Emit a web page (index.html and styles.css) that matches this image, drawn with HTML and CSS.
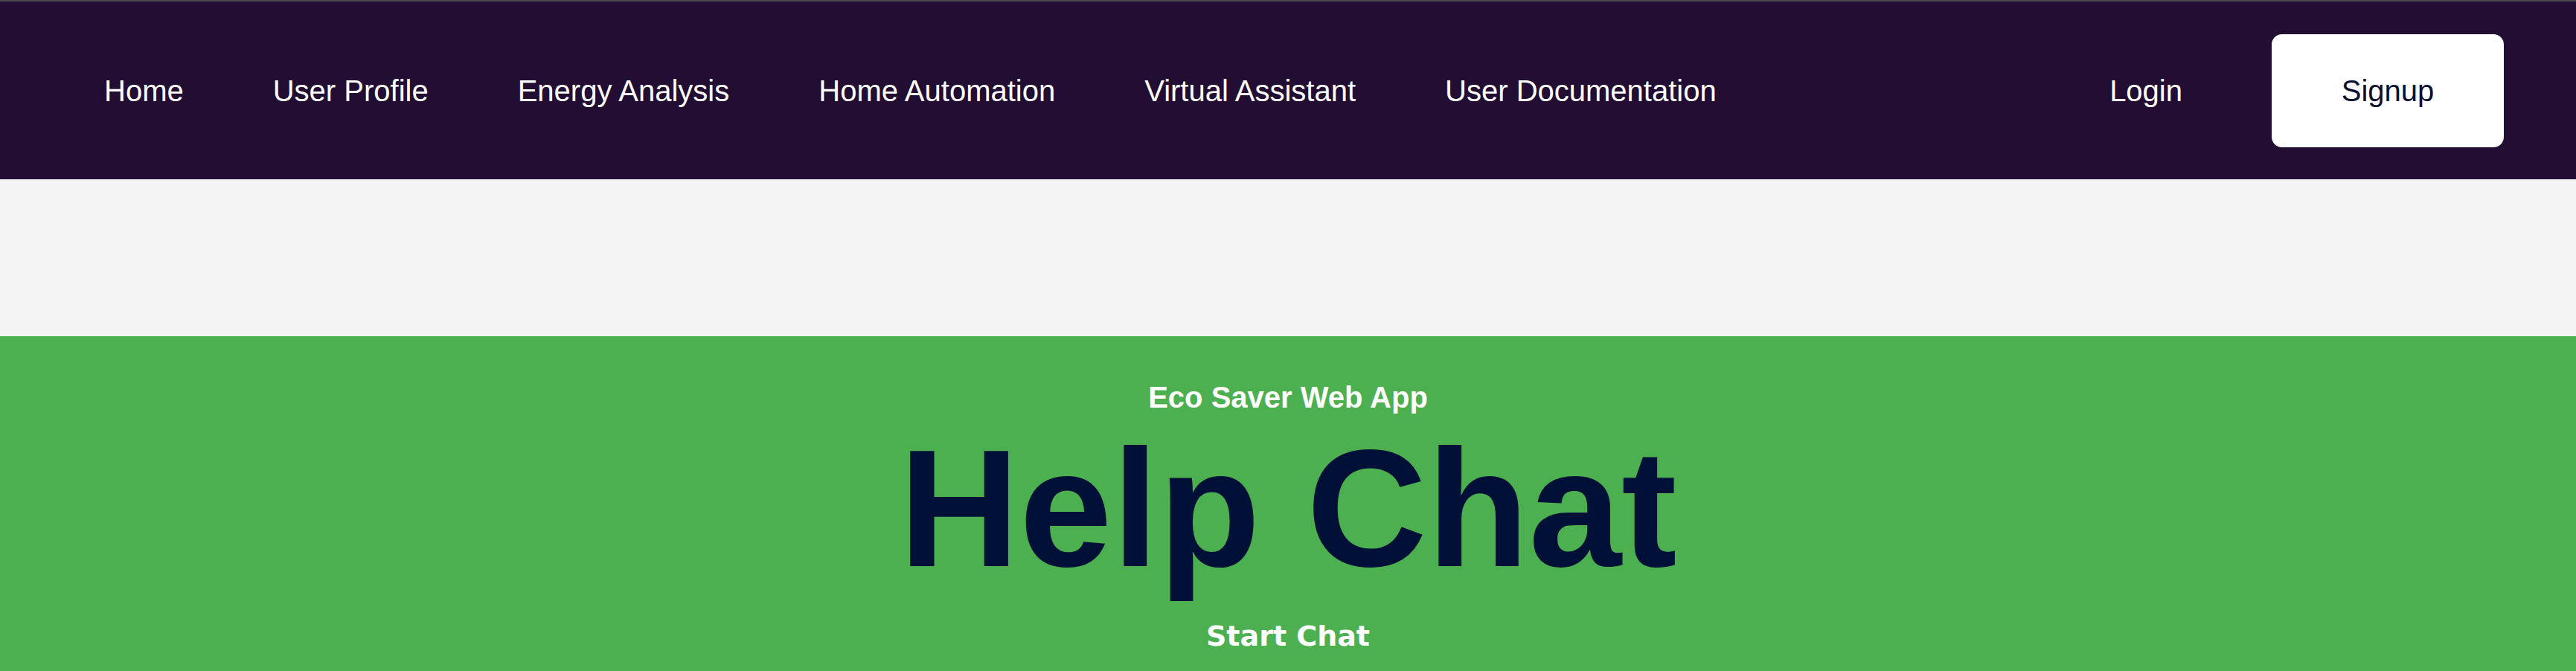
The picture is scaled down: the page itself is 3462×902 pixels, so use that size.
FILE: index.html
```html
<!DOCTYPE html>
<html lang="en">
<head>
<meta charset="utf-8">
<title>Help Chat - Eco Saver</title>
<link rel="stylesheet" href="styles.css">
</head>
<body>
<header class="topbar">
  <nav class="nav-main">
    <a class="nav-link" href="#">Home</a>
    <a class="nav-link" href="#">User Profile</a>
    <a class="nav-link" href="#">Energy Analysis</a>
    <a class="nav-link" href="#">Home Automation</a>
    <a class="nav-link" href="#">Virtual Assistant</a>
    <a class="nav-link" href="#">User Documentation</a>
  </nav>
  <div class="nav-auth">
    <a class="nav-link" href="#">Login</a>
    <a class="signup" href="#">Signup</a>
  </div>
</header>
<div class="spacer"></div>
<section class="hero">
  <p class="eyebrow">Eco Saver Web App</p>
  <h1 class="title">Help Chat</h1>
  <button class="start">Start Chat</button>
</section>
</body>
</html>
```

FILE: styles.css
```css
html, body {
  margin: 0;
  padding: 0;
}
body {
  background: #f4f4f4;
  font-family: "Liberation Sans", Arial, sans-serif;
}
.topbar {
  box-sizing: border-box;
  height: 241px;
  border-top: 2px solid #4d4a50;
  background: #220d33;
  display: flex;
  align-items: center;
  justify-content: space-between;
  padding: 0 97px 0 140px;
}
.nav-main {
  display: flex;
  align-items: center;
  gap: 120px;
}
.nav-link {
  color: #ffffff;
  text-decoration: none;
  font-size: 40px;
  line-height: 46px;
}
.nav-auth {
  display: flex;
  align-items: center;
  gap: 120px;
}
.signup {
  box-sizing: border-box;
  width: 312px;
  height: 152px;
  display: flex;
  align-items: center;
  justify-content: center;
  background: #ffffff;
  border-radius: 14px;
  color: #0a1030;
  text-decoration: none;
  font-size: 40px;
  line-height: 46px;
}
.spacer {
  height: 211px;
  background: #f4f4f4;
}
.hero {
  background: #4caf50;
  min-height: 450px;
  padding-top: 59px;
  display: flex;
  flex-direction: column;
  align-items: center;
  text-align: center;
}
.eyebrow {
  margin: 0;
  color: #ffffff;
  font-weight: bold;
  font-size: 40px;
  line-height: 46px;
}
.title {
  margin: 0;
  color: #001036;
  font-weight: bold;
  font-size: 224px;
  line-height: 253px;
}
.start {
  margin-top: 23px;
  padding: 0;
  border: none;
  background: transparent;
  color: #ffffff;
  font-family: "DejaVu Sans", sans-serif;
  font-weight: bold;
  font-size: 38px;
  line-height: 44px;
}
```
